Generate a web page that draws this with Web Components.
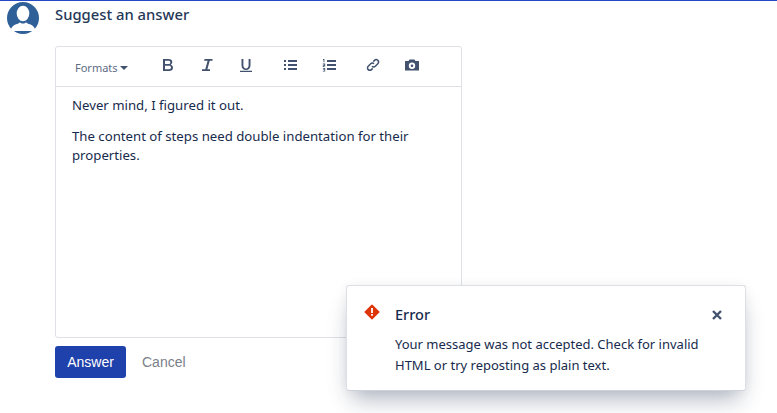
<!DOCTYPE html>
<html>
<head>
<meta charset="utf-8">
<title>Suggest an answer</title>
<style>
html, body { margin: 0; height: 100%; background: #fff; overflow: hidden; }
body { font-family: "Noto Sans", sans-serif; font-size: 13.2px; color: #172b4d; }
</style>
</head>
<body>
<answer-page>
  <answer-editor>
    <p>Never mind, I figured it out.</p>
    <p>The content of steps need double indentation for their properties.</p>
  </answer-editor>
</answer-page>
<error-flag heading="Error">Your message was not accepted. Check for invalid HTML or try reposting as plain text.</error-flag>

<script>
// Page shell: avatar on the left, form column on the right
class AnswerPage extends HTMLElement {
  constructor() {
    super();
    this.attachShadow({ mode: 'open' }).innerHTML = `
      <style>
      :host {
        display: flex;
        gap: 16px;
        box-sizing: border-box;
        height: 413px;
        padding: 2px 0 0 7px;
        border-top: 1px solid #2549c4;
      }
      .avatar { flex: none; width: 32px; height: 32px; margin-top: -1px; }
      .col { width: 407px; }
      .heading {
        margin: 0;
        font-size: 14.8px;
        font-weight: 500;
        line-height: 20px;
        height: 43px;
        padding-top: 1px;
        box-sizing: border-box;
        color: #253858;
      }
      .actions { display: flex; align-items: center; gap: 16px; margin-top: 8px; }
      .answer {
        width: 71px;
        height: 32px;
        border: 0;
        border-radius: 3px;
        background: #1f41ab;
        color: #fff;
        font: 14px "Liberation Sans", sans-serif;
      }
      .cancel { font: 14px "Liberation Sans", sans-serif; color: #7a7f89; }
      </style>
      <svg class="avatar" viewBox="0 0 32 32">
        <circle cx="16" cy="16" r="16" fill="#2f6097"/>
        <ellipse cx="16" cy="11.500" rx="6.300" ry="7.800" fill="#fff"/>
        <path d="M3.500 29c.6-3.500 2.500-6 5.500-6.800 1.700-.4 3-.9 4-2 .8 1.800 5.200 1.800 6 0 1 1.100 2.300 1.600 4 2 3 .8 4.900 3.300 5.500 6.800z" fill="#fff"/>
      </svg>
      <div class="col">
        <h2 class="heading">Suggest an answer</h2>
        <slot></slot>
        <div class="actions">
          <button class="answer">Answer</button>
          <span class="cancel">Cancel</span>
        </div>
      </div>
    `;
  }
}
customElements.define('answer-page', AnswerPage);

// Rich text box with toolbar
class AnswerEditor extends HTMLElement {
  constructor() {
    super();
    this.attachShadow({ mode: 'open' }).innerHTML = `
      <style>
      :host {
        display: flex;
        flex-direction: column;
        box-sizing: border-box;
        height: 292px;
        border: 1px solid #dfe1e6;
        border-radius: 3px;
      }
      .toolbar {
        display: flex;
        align-items: center;
        flex: none;
        box-sizing: border-box;
        height: 40px;
        padding: 0 0 4px 19px;
        border-bottom: 1px solid #dfe1e6;
        color: #42526e;
      }
      .formats { display: flex; align-items: center; gap: 2px; width: 86px; font-size: 11px; color: #5e6c84; padding-top: 6px; box-sizing: border-box; }
      .caret { width: 0; height: 0; border: 4px solid transparent; border-top-color: #42526e; border-bottom: 0; }
      svg { flex: none; width: 14px; height: 14px; display: block; fill: #42526e; }
      .b1 { margin-right: 25px; } .b2 { margin-right: 25px; } .b3 { margin-right: 30px; }
      .b4 { margin-right: 25px; } .b5 { margin-right: 30px; } .b6 { margin-right: 25px; }
      .body { padding: 9px 16px; font-size: 13.2px; line-height: 19px; color: #172b4d; }
      ::slotted(p) { margin: 0 0 12px; }
      </style>
      <div class="toolbar">
        <div class="formats"><span>Formats</span><span class="caret"></span></div>
        <svg class="b1" viewBox="0 0 14 14"><path fill-rule="evenodd" d="M2 1h5.500c2.400 0 3.800 1.200 3.800 3.100 0 1.200-.6 2.100-1.600 2.600 1.400.4 2.300 1.500 2.300 3 0 2.200-1.600 3.300-4.100 3.300H2zm2 1.800v3.200h3.300c1.300 0 2-.6 2-1.600s-.7-1.600-2-1.600zm0 5v3.400h3.800c1.400 0 2.200-.6 2.200-1.700s-.8-1.700-2.200-1.700z"/></svg>
        <svg class="b2" viewBox="0 0 14 14"><path d="M4.500 1h8v1.800H9.700L7.400 11.200h2.600V13H2v-1.800h3.300l2.300-8.400H4.100z"/></svg>
        <svg class="b3" viewBox="0 0 14 14"><path d="M2.500 1h1.900v6.300c0 2 1 3.100 2.600 3.100s2.600-1.100 2.600-3.100V1h1.900v6.300c0 3.100-1.800 4.800-4.500 4.800S2.500 10.400 2.500 7.300zM1 12.700h12V14H1z"/></svg>
        <svg class="b4" viewBox="0 0 14 14"><path d="M1 2h2v2H1zm0 4h2v2H1zm0 4h2v2H1zM5 2h9v2H5zm0 4h9v2H5zm0 4h9v2H5z"/></svg>
        <svg class="b5" viewBox="0 0 14 14"><path d="M1 1h1.400v3.200H1.500V2H1zM.8 5.500h2.400v2.400H1.800v.5h1.400V9H.8V7.300h1.500v-.9H.8zM.8 10h2.400v3.500H.8v-.7h1.500v-.7H1v-.7h1.300v-.7H.8zM5 2h9v2H5zm0 4h9v2H5zm0 4h9v2H5z"/></svg>
        <svg class="b6" viewBox="0 0 14 14" style="fill:none;stroke:#42526e;stroke-width:1.500"><path d="M6 8.200a2.300 2.300 0 0 0 3.300 0l2.500-2.500a2.300 2.300 0 0 0-3.300-3.300L7.300 3.600"/><path d="M8 5.800a2.300 2.300 0 0 0-3.300 0L2.200 8.300a2.300 2.300 0 0 0 3.300 3.300l1.200-1.200"/></svg>
        <svg viewBox="0 0 14 14"><path fill-rule="evenodd" d="M0 3h3.500l1-1.500h5l1 1.500H14v9.500H0zm7 1.500a3.200 3.200 0 1 0 0 6.400 3.200 3.200 0 0 0 0-6.400zm0 1.900a1.300 1.300 0 1 1 0 2.600 1.300 1.300 0 0 1 0-2.600z"/></svg>
      </div>
      <div class="body"><slot></slot></div>
    `;
  }
}
customElements.define('answer-editor', AnswerEditor);

// Floating error flag, sits over the page
class ErrorFlag extends HTMLElement {
  constructor() {
    super();
    this.attachShadow({ mode: 'open' }).innerHTML = `
      <style>
      :host {
        position: absolute;
        left: 346px;
        top: 285px;
        box-sizing: border-box;
        display: grid;
        grid-template-columns: 31px 1fr 14px;
        align-content: start;
        width: 400px;
        height: 106px;
        padding: 18px 21px 0 17px;
        background: #fff;
        border: 1px solid #dcdfe5;
        border-bottom-color: #cfd2da;
        border-radius: 3px;
        box-shadow: 0 14px 22px -6px rgba(9,30,66,.32), 0 0 12px rgba(9,30,66,.05);
      }
      svg { display: block; }
      .icon { width: 16px; height: 16px; }
      .title { font-size: 14.5px; font-weight: 500; line-height: 20px; color: #172b4d; }
      .close { width: 14px; height: 14px; margin-top: 4px; }
      .msg { grid-column: 2 / 4; margin-top: 10px; font-size: 13px; line-height: 20.500px; color: #172b4d; }
      </style>
      <svg class="icon" viewBox="0 0 16 16">
        <path d="M8 1.200 14.800 8 8 14.800 1.200 8z" fill="#de350b" stroke="#de350b" stroke-width="1.500" stroke-linejoin="round"/>
        <path d="M7.100 4h1.800v5H7.100zM7.100 10h1.800v1.800H7.100z" fill="#fff"/>
      </svg>
      <div class="title"></div>
      <svg class="close" viewBox="0 0 14 14"><path d="M3 3l8 8M11 3l-8 8" stroke="#42526e" stroke-width="2.400" fill="none"/></svg>
      <div class="msg"><slot></slot></div>
    `;
  }
  connectedCallback() {
    this.shadowRoot.querySelector('.title').textContent = this.getAttribute('heading') || '';
  }
}
customElements.define('error-flag', ErrorFlag);
</script>
</body>
</html>
